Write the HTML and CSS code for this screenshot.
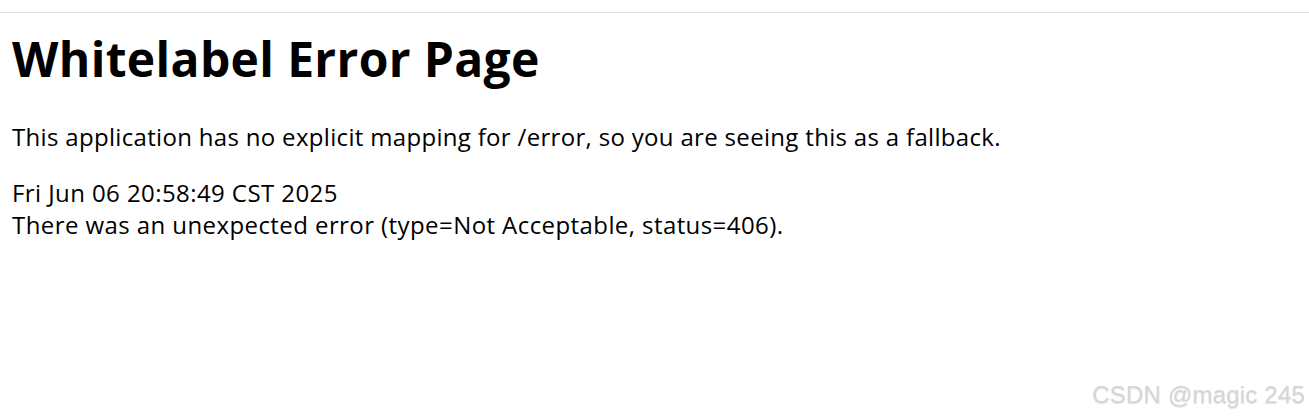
FILE: index.html
```html
<!DOCTYPE html>
<html lang="en">
<head>
    <meta charset="UTF-8">
    <title>Error</title>
    <link rel="stylesheet" href="styles.css">
</head>
<body>
    <div class="topbar"></div>
    <main class="page">
        <h1>Whitelabel Error Page</h1>
        <p>This application has no explicit mapping for /error, so you are seeing this as a fallback.</p>
        <div id="created">Fri Jun 06 20:58:49 CST 2025</div>
        <div>There was an unexpected error (type=Not Acceptable, status=406).</div>
    </main>
    <div class="watermark">CSDN @magic 245</div>
</body>
</html>
```
FILE: styles.css
```css
html, body {
    margin: 0;
    padding: 0;
    background: #fff;
}
body {
    font-family: "Open Sans", "Noto Sans", sans-serif;
    color: #000;
    font-size: 24px;
    height: 418px;
    overflow: hidden;
    position: relative;
}
.topbar {
    height: 12px;
    border-bottom: 1px solid #dedede;
}
.page {
    padding: 0 12px;
}
h1 {
    font-size: 48px;
    font-weight: bold;
    letter-spacing: 0.35px;
    margin: 15px 0 31px;
    line-height: 1.3;
}
p {
    margin: 0 0 24px;
    line-height: 32px;
    letter-spacing: 0.32px;
}
.page div {
    line-height: 32px;
    letter-spacing: 0.42px;
}
.watermark {
    position: absolute;
    right: 4px;
    bottom: 9px;
    font-family: "Liberation Sans", Arial, sans-serif;
    font-size: 24px;
    letter-spacing: 0.2px;
    color: #d6d6d6;
    text-shadow: 0 1px 1px rgba(0, 0, 0, 0.12);
}
```
